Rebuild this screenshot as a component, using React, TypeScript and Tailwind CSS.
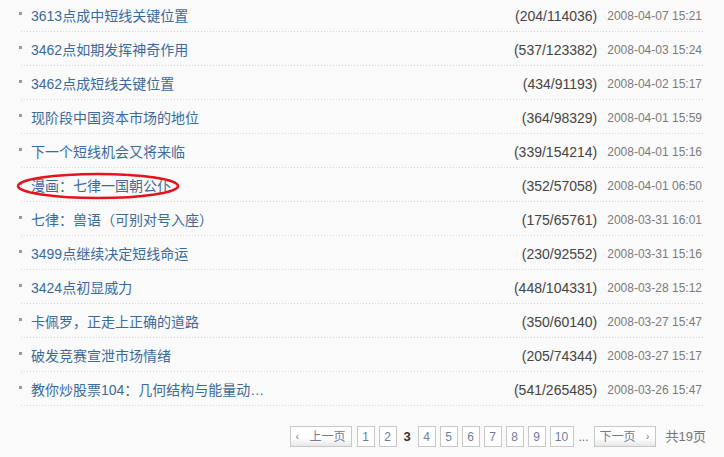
import React from 'react';

interface Post {
  title: string;
  replies: number;
  views: number;
  date: string;
  marked?: boolean;
}

const posts: Post[] = [
  { title: '3613点成中短线关键位置', replies: 204, views: 114036, date: '2008-04-07 15:21' },
  { title: '3462点如期发挥神奇作用', replies: 537, views: 123382, date: '2008-04-03 15:24' },
  { title: '3462点成短线关键位置', replies: 434, views: 91193, date: '2008-04-02 15:17' },
  { title: '现阶段中国资本市场的地位', replies: 364, views: 98329, date: '2008-04-01 15:59' },
  { title: '下一个短线机会又将来临', replies: 339, views: 154214, date: '2008-04-01 15:16' },
  { title: '漫画：七律一国朝公仆', replies: 352, views: 57058, date: '2008-04-01 06:50', marked: true },
  { title: '七律：兽语（可别对号入座）', replies: 175, views: 65761, date: '2008-03-31 16:01' },
  { title: '3499点继续决定短线命运', replies: 230, views: 92552, date: '2008-03-31 15:16' },
  { title: '3424点初显威力', replies: 448, views: 104331, date: '2008-03-28 15:12' },
  { title: '卡佩罗，正走上正确的道路', replies: 350, views: 60140, date: '2008-03-27 15:47' },
  { title: '破发竞赛宣泄市场情绪', replies: 205, views: 74344, date: '2008-03-27 15:17' },
  { title: '教你炒股票104：几何结构与能量动…', replies: 541, views: 265485, date: '2008-03-26 15:47' },
];

const pages = [1, 2, 3, 4, 5, 6, 7, 8, 9, 10];
const current = 3;

const PostRow: React.FC<{ post: Post }> = ({ post }) => (
  <li className="relative flex items-center h-[34px] pt-[2px] pl-[12px] pr-[2px] bg-[linear-gradient(to_right,#d6d6d6_1px,transparent_1px)] bg-[length:3px_1px] bg-repeat-x bg-bottom">
    <span className="absolute left-0 top-[14px] w-[3px] h-[3px] bg-[#999]" />
    <a href="#" className="flex-1 text-[14px] text-[#3a6a9c] whitespace-nowrap">
      {post.title}
    </a>
    <span className="text-[14px] text-[#444]">
      ({post.replies}/{post.views})
    </span>
    <span className="ml-[10px] text-[12px] text-[#7a7a7a]">{post.date}</span>
    {post.marked && (
      <svg
        className="absolute left-[-3px] top-[4px]"
        width="164"
        height="28"
        viewBox="0 0 164 28"
        fill="none"
      >
        <ellipse cx="82" cy="14" rx="80" ry="12" stroke="#e3141c" strokeWidth="2.6" />
      </svg>
    )}
  </li>
);

const NavButton: React.FC<{ label: string; dir: 'prev' | 'next' }> = ({ label, dir }) => (
  <a
    href="#"
    className="flex items-center justify-between w-[62px] h-[21px] px-[5px] border border-[#c8c8c8] bg-[linear-gradient(to_bottom,#ffffff_60%,#e6e6e6)] text-[12px] text-[#6d7b9c]"
  >
    {dir === 'prev' ? (
      <>
        <span className="text-[11px]">‹</span>
        <span>{label}</span>
      </>
    ) : (
      <>
        <span>{label}</span>
        <span className="text-[11px]">›</span>
      </>
    )}
  </a>
);

export default function App() {
  return (
    <div
      className="w-[724px] h-[457px] bg-[#fafafa] overflow-hidden"
      style={{ fontFamily: '"Liberation Sans", "Noto Sans CJK SC", sans-serif' }}
    >
      <ul className="ml-[19px] mr-[20px] -mt-[2px]">
        {posts.map((p, i) => (
          <PostRow key={i} post={p} />
        ))}
      </ul>

      <div className="flex items-center justify-end gap-[4px] mt-[20px] pr-[18px] text-[12px]">
        <NavButton label="上一页" dir="prev" />
        <span className="w-0 -ml-[3px]" />
        {pages.map((n) =>
          n === current ? (
            <span key={n} className="w-[13px] text-center text-[13px] font-bold text-[#333]">
              {n}
            </span>
          ) : (
            <a
              key={n}
              href="#"
              className={`flex items-center justify-center h-[21px] border border-[#c8c8c8] bg-white text-[#6d7b9c] ${
                n === 10 ? 'w-[24px]' : 'w-[18px]'
              }`}
            >
              {n}
            </a>
          )
        )}
        <span className="text-[#666] mx-[1px]">...</span>
        <NavButton label="下一页" dir="next" />
        <span className="ml-[6px] text-[13px] text-[#777]">共19页</span>
      </div>
    </div>
  );
}
